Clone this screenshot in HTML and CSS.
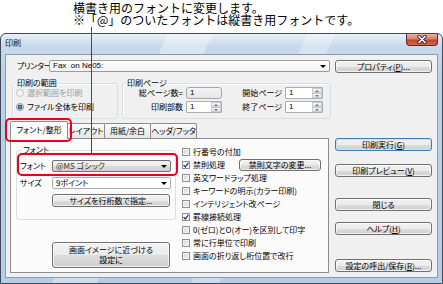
FILE: index.html
```html
<!DOCTYPE html>
<html lang="ja">
<head>
  <meta charset="UTF-8">
  <title>印刷</title>
  <link rel="stylesheet" href="styles.css">
</head>
<body>

  <!-- 説明 -->
  <div class="note">
    <p>横書き用のフォントに変更します。</p>
    <p>※「@」のついたフォントは縦書き用フォントです。</p>
  </div>

  <!-- ダイアログ -->
  <div class="window">
    <div class="titlebar">
      <span class="title">印刷</span>
      <span class="close">
        <svg width="12" height="9" viewBox="0 0 12 9"><path d="M3 1.5 L9 7.5 M9 1.5 L3 7.5" stroke="#4a1d16" stroke-width="3.4" stroke-linecap="round"/><path d="M3 1.5 L9 7.5 M9 1.5 L3 7.5" stroke="#fff" stroke-width="1.7" stroke-linecap="round"/></svg>
      </span>
    </div>

    <div class="client">
      <div class="printer-row">
        <span class="printer-label">プリンター</span>
        <div class="combo printer-combo"><span>Fax&nbsp; on Ne05:</span><i class="arrow"></i></div>
        <button class="btn side">プロパティ(<u>P</u>)...</button>
      </div>

      <div class="groups">
        <div class="group range">
          <div class="group-title">印刷の範囲</div>
          <div class="radio disabled"><i class="dot"></i>選択範囲を印刷</div>
          <div class="radio"><i class="dot on"></i>ファイル全体を印刷</div>
        </div>
        <div class="group pages">
          <div class="group-title">印刷ページ</div>
          <div class="page-grid">
            <span class="lbl">総ページ数=</span>
            <span class="field readonly">1</span>
            <span class="lbl">開始ページ</span>
            <span class="field">1<i class="spinner"><b class="up"></b><b class="down"></b></i></span>
            <span class="lbl">印刷部数</span>
            <span class="field">1<i class="spinner"><b class="up"></b><b class="down"></b></i></span>
            <span class="lbl">終了ページ</span>
            <span class="field">1<i class="spinner"><b class="up"></b><b class="down"></b></i></span>
          </div>
        </div>
      </div>

      <div class="main">
        <div class="sheet">
          <div class="tabs">
            <span class="tab active">フォント/整形</span>
            <span class="tab">レイアウト</span>
            <span class="tab">用紙/余白</span>
            <span class="tab">ヘッダ/フッタ</span>
          </div>
          <div class="panel">
            <div class="panel-left">
              <div class="group font-group">
                <div class="group-title">フォント</div>
                <div class="field-row">
                  <span class="row-label">フォント</span>
                  <div class="combo button-combo"><span>@MS ゴシック</span><i class="arrow"></i></div>
                </div>
                <div class="field-row">
                  <span class="row-label">サイズ</span>
                  <div class="combo white-combo"><span>9ポイント</span><i class="arrow"></i></div>
                </div>
                <button class="btn wide">サイズを行桁数で指定...</button>
              </div>
              <button class="btn wide tall">画面イメージに近づける<br>設定に</button>
            </div>

            <ul class="checks">
              <li><i class="cb"></i>行番号の付加</li>
              <li><i class="cb on"><svg width="6" height="6" viewBox="0 0 6 6"><path d="M0.6 3.1 L2.3 4.9 L5.4 0.8" stroke="#1f3c8c" stroke-width="1.3" fill="none"/></svg></i>禁則処理<button class="btn small">禁則文字の変更...</button></li>
              <li><i class="cb"></i>英文ワードラップ処理</li>
              <li><i class="cb"></i>キーワードの明示(カラー印刷)</li>
              <li><i class="cb"></i>インテリジェント改ページ</li>
              <li><i class="cb on"><svg width="6" height="6" viewBox="0 0 6 6"><path d="M0.6 3.1 L2.3 4.9 L5.4 0.8" stroke="#1f3c8c" stroke-width="1.3" fill="none"/></svg></i>罫線接続処理</li>
              <li><i class="cb"></i>0(ゼロ)とO(オー)を区別して印字</li>
              <li><i class="cb"></i>常に行単位で印刷</li>
              <li><i class="cb"></i>画面の折り返し桁位置で改行</li>
            </ul>
          </div>
        </div>

        <div class="side-buttons">
          <button class="btn side default">印刷実行(<u>G</u>)</button>
          <button class="btn side b-preview">印刷プレビュー(<u>V</u>)</button>
          <button class="btn side b-close">閉じる</button>
          <button class="btn side b-help">ヘルプ(<u>H</u>)</button>
          <button class="btn side b-save">設定の呼出/保存(<u>R</u>)...</button>
        </div>
      </div>
    </div>
  </div>

  <!-- 赤い引き出し線 -->
  <div class="mark-line"></div>
  <div class="mark-box mark-tab"></div>
  <div class="mark-box mark-font"></div>

</body>
</html>
```

FILE: styles.css
```css
* {
  box-sizing: border-box;
}

body {
  margin: 0;
  width: 443px;
  height: 284px;
  overflow: hidden;
  position: relative;
  background: #fff;
  font-family: "Noto Sans CJK JP", "Noto Sans", sans-serif;
  color: #000;
}

/* 説明文 */
.note {
  height: 33px;
  padding: 2px 0 0 73px;
  font-size: 12px;
  line-height: 12px;
}

.note p {
  margin: 0;
}

/* ウィンドウ枠 */
.window {
  height: 251px;
  display: flex;
  flex-direction: column;
  padding: 0 4px 5px 4px;
  border: 1px solid #3d4858;
  border-radius: 6px 6px 0 0;
  background:
    linear-gradient(115deg, transparent 0 30%, rgba(255,255,255,0.35) 30% 38%, transparent 38% 55%, rgba(255,255,255,0.3) 55% 60%, transparent 60%),
    linear-gradient(180deg, #e9f0f8 0, #c8d9ec 12px, #bcd1e9 40px, #b6cde7 100%);
  font-size: 8px;
  font-feature-settings: "palt";
  white-space: nowrap;
}

.titlebar {
  height: 20px;
  display: flex;
  justify-content: space-between;
  align-items: flex-start;
}

.title {
  margin-top: 3px;
  line-height: 11px;
  font-size: 8px;
  color: #111;
}

.close {
  width: 32px;
  height: 12px;
  display: flex;
  justify-content: center;
  align-items: center;
  border: 1px solid #5e2a22;
  border-top: none;
  border-radius: 0 0 4px 4px;
  background: linear-gradient(180deg, #eab0a4 0, #d98370 45%, #c2442a 55%, #d36a50 100%);
}

.client {
  flex: 1;
  background: #f0f0f0;
  border: 1px solid #8a9aad;
}

/* プリンター行 */
.printer-row {
  display: flex;
  align-items: center;
  height: 12px;
  margin-top: 5px;
  padding-left: 11px;
}

.printer-label {
  width: 32px;
  line-height: 10px;
  letter-spacing: -0.3px;
}

.combo {
  display: flex;
  align-items: center;
  height: 12px;
  padding-left: 3px;
  border: 1px solid #9b9b9b;
  border-radius: 2px;
  line-height: 10px;
}

.printer-combo {
  width: 281px;
  margin-right: 5px;
  background: linear-gradient(180deg, #fdfdfd, #f3f3f3);
  font-family: "Liberation Sans", "Noto Sans CJK JP", sans-serif;
}

.arrow {
  margin-left: auto;
  margin-right: 3px;
  border-left: 3px solid transparent;
  border-right: 3px solid transparent;
  border-top: 3px solid #000;
}

.button-combo {
  flex: 1;
  border-color: #707070;
  background: linear-gradient(180deg, #f2f2f2 0, #ebebeb 50%, #dddddd 51%, #cfcfcf 100%);
  color: #333;
}

.white-combo {
  flex: 1;
  border-color: #abadb3;
  background: #fff;
}

/* ボタン */
.btn {
  display: block;
  height: 13px;
  padding: 0;
  font: inherit;
  line-height: 11px;
  color: #000;
  text-align: center;
  white-space: nowrap;
  border: 1px solid #707070;
  border-radius: 3px;
  background: linear-gradient(180deg, #f2f2f2 0, #ebebeb 50%, #dddddd 51%, #cfcfcf 100%);
  box-shadow: inset 0 0 0 1px rgba(255,255,255,0.7);
}

.side {
  width: 97px;
}

.default {
  border-color: #3c7fb1;
  box-shadow: inset 0 0 0 1px #bfe6f8;
}

/* グループ */
.group {
  border: 1px solid #d5dfe5;
  border-radius: 3px;
  box-shadow: inset 1px 1px 0 #fff;
}

.group-title {
  width: fit-content;
  height: 10px;
  margin: -6px 0 -2px 3px;
  padding: 0 1px;
  line-height: 10px;
  background: #f0f0f0;
}

.groups {
  display: flex;
  gap: 4px;
  margin-top: 11px;
  padding-left: 6px;
}

.range {
  width: 106px;
  height: 36px;
  padding-left: 3px;
}

.range .group-title {
  margin-left: 0;
}

.radio {
  display: flex;
  align-items: center;
  gap: 3px;
  height: 14px;
  line-height: 10px;
}

.radio.disabled {
  color: #9c9c9c;
}

.dot {
  width: 8px;
  height: 8px;
  border: 1px solid #8e8f8f;
  border-radius: 50%;
  background: linear-gradient(135deg, #d9d9d9, #f7f7f7);
}

.disabled .dot {
  border-color: #c6c6c6;
  background: #f4f4f4;
}

.dot.on {
  background: radial-gradient(circle, #6fb6ea 0, #1f5f9f 1.6px, #2c6aa6 2.2px, #eaeaea 2.6px, #f7f7f7 100%);
}

.pages {
  width: 209px;
  height: 36px;
}

.page-grid {
  display: grid;
  grid-template-columns: 63px 36px 63px 38px;
  grid-auto-rows: 14px;
  align-items: center;
}

.lbl {
  text-align: right;
  padding-right: 3px;
  line-height: 10px;
}

.field {
  display: flex;
  align-items: center;
  height: 12px;
  padding-left: 3px;
  border: 1px solid #abadb3;
  border-radius: 1px;
  background: #fff;
  line-height: 10px;
  font-family: "Liberation Sans", sans-serif;
}

.field.readonly {
  border-color: #a5a9ad;
  border-radius: 3px;
  background: linear-gradient(180deg, #f4f4f4, #e6e6e6);
}

.spinner {
  display: flex;
  flex-direction: column;
  width: 10px;
  height: 10px;
  margin-left: auto;
}

.spinner b {
  flex: 1;
  display: flex;
  justify-content: center;
  align-items: center;
  border: 1px solid #c9cbce;
  background: linear-gradient(180deg, #f6f6f6, #e4e4e4);
}

.spinner .up::after {
  content: "";
  border-left: 2px solid transparent;
  border-right: 2px solid transparent;
  border-bottom: 2px solid #6d7a8a;
}

.spinner .down::after {
  content: "";
  border-left: 2px solid transparent;
  border-right: 2px solid transparent;
  border-top: 2px solid #6d7a8a;
}

/* タブ */
.main {
  display: flex;
  gap: 5px;
  margin-top: 2px;
  padding-left: 4px;
}

.sheet {
  width: 320px;
}

.tabs {
  display: flex;
  align-items: flex-end;
  height: 17px;
}

.tab {
  height: 15px;
  margin-left: -1px;
  line-height: 13px;
  text-align: center;
  border: 1px solid #898c95;
  border-bottom: none;
  border-radius: 2px 2px 0 0;
  background: linear-gradient(180deg, #fbfbfb, #e6e6e6);
}

.tab:nth-child(1) { width: 58px; margin-left: 0; }
.tab:nth-child(2) { width: 38px; }
.tab:nth-child(3) { width: 47px; }
.tab:nth-child(4) { width: 47px; }

.tab.active {
  position: relative;
  z-index: 1;
  height: 18px;
  margin-bottom: -1px;
  line-height: 16px;
  background: #fbfbfb;
}

.panel {
  display: flex;
  width: 319px;
  height: 135px;
  border: 1px solid #898c95;
  background: #fbfbfb;
}

.panel-left {
  width: 171px;
  padding: 11px 0 0 5px;
}

.font-group {
  width: 160px;
  height: 70px;
  padding: 0 4px 0 3px;
}

.font-group .group-title {
  margin: -6px 0 5px 2px;
  background: #fbfbfb;
}

.field-row {
  display: flex;
  align-items: center;
  height: 12px;
  margin-bottom: 5px;
}

.row-label {
  width: 32px;
  line-height: 10px;
}

.wide {
  width: 118px;
  margin: 10px 0 0 32px;
}

.font-group .wide {
  margin-top: 5px;
}

.tall {
  height: 26px;
  margin: 22px 0 0 36px;
  line-height: 10px;
}

/* チェック */
.checks {
  flex: 1;
  margin: 0;
  padding: 6px 7px 0 0;
  list-style: none;
}

.checks li {
  display: flex;
  align-items: center;
  gap: 3px;
  height: 13px;
  line-height: 10px;
}

.cb {
  display: flex;
  justify-content: center;
  align-items: center;
  width: 8px;
  height: 8px;
  border: 1px solid #8f8f8f;
  background: linear-gradient(135deg, #d6d6d6, #f4f4f4);
  box-shadow: inset 0 0 0 1px #f2f2f2;
}

.cb.on {
  background: #fff;
}

.small {
  width: 82px;
  height: 12px;
  margin-left: auto;
  line-height: 10px;
}

/* 右側ボタン */
.side-buttons {
  display: flex;
  flex-direction: column;
  padding-top: 17px;
}

.b-preview { margin-top: 13px; }
.b-close { margin-top: 21px; }
.b-help { margin-top: 11px; }
.b-save { margin-top: 24px; }

/* 赤い引き出し線 */
.mark-line {
  position: absolute;
  left: 91px;
  top: 27px;
  width: 1px;
  height: 126px;
  background: #e8001c;
}

.mark-box {
  position: absolute;
  border: 2px solid #e8001c;
  border-radius: 5px;
}

.mark-tab {
  left: 5px;
  top: 118px;
  width: 67px;
  height: 24px;
}

.mark-font {
  left: 17px;
  top: 153px;
  width: 161px;
  height: 23px;
}
```
